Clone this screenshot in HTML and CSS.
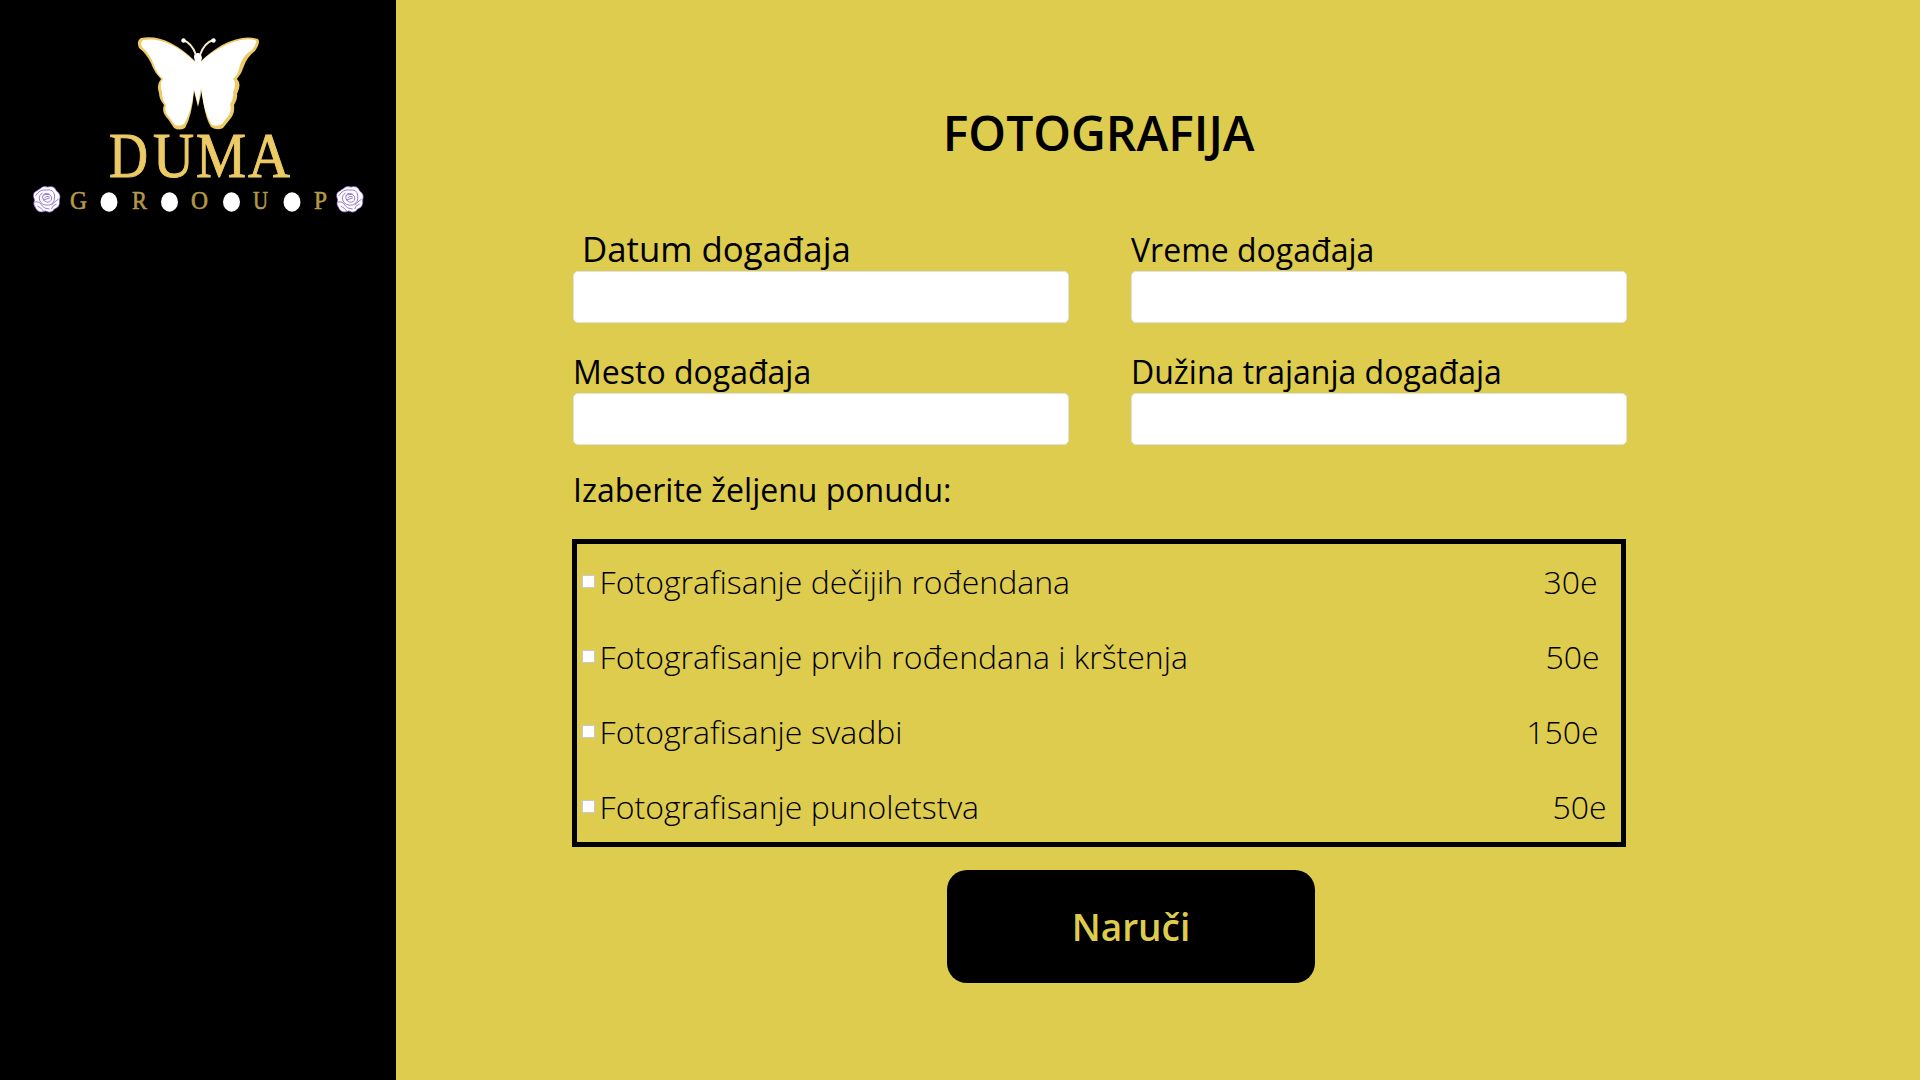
FILE: index.html
```html
<!DOCTYPE html>
<html lang="sr">
<head>
<meta charset="utf-8">
<title>Fotografija</title>
<link rel="stylesheet" href="styles.css">
</head>
<body>
<aside class="sidebar">
<svg class="logo" viewBox="0 0 396 230" role="img" aria-label="Duma Group">
  <defs>
    <g id="rose">
      <path fill="#fff" stroke="#7a4fc0" stroke-width=".7" d="M-7-10Q-3-14 1-12Q8-14 10-8Q15-5 13 1Q14 8 8 10Q5 15-1 12Q-8 15-11 9Q-14 5-12 1Q-15-6-10-8Z"/>
      <g fill="none" stroke="#7046bd" stroke-width=".7">
        <path d="M-11-3Q-7-10 0-9Q7-10 8-4Q9 4 3 6Q-5 7-7 1Q-8-4-4-6"/>
        <path d="M-4-2Q-3-7 2-5Q6-3 5 0Q4 4 0 3Q-4 2-4-2Z"/>
        <path d="M-2-1Q0-4 3-2M-3 1L3-1M-3-4L3-5"/>
        <path d="M-12 3Q-7 2-5 6Q-3 10 3 10M-9 7Q-5 9-3 12M5 10Q5 7 10 5M12 0Q8 3 5 6"/>
      </g>
    </g>
  </defs>
  <path fill="#ecca66" d="M195 61Q166 33 141 38Q136 41 139 48Q146 53 151 63Q154 72 161 79Q156 85 159 93Q159 99 164 105Q161 112 168 119L174 128Q179 131 185 128Q192 116 194 91L198 107L202 90Q204 116 211 127Q217 131 223 128L231 118Q235 113 234 105Q238 99 237 94Q242 84 237 79Q242 73 244 66Q247 57 255 51Q261 42 258 39Q243 34 222 45Q209 53 201 61Z"/>
  <path fill="#fff" d="M195 62Q168 36 143 40Q139 43 143 48Q150 54 154 65Q157 74 163 79Q159 83 162 92Q162 100 166 105Q164 112 169 117L175 125Q180 127 184 124Q192 111 194 89L198 105L201 88Q204 114 212 125Q217 127 222 124L229 115Q232 111 230 104Q234 99 233 93Q237 82 233 79Q238 75 240 65Q243 55 252 50Q258 42 255 40Q241 37 222 47Q208 54 201 62L202 58Q201 53 198 53Q194 53 194 57Z"/>
  <path class="antennae" d="M196 55Q192 43 183 40M200 55Q204 43 213 40"/>
  <circle cx="183.5" cy="40.5" r="2.2" fill="#fff"/><circle cx="213.5" cy="40.5" r="2.2" fill="#fff"/>
  <g class="wordmark">
    <text x="109" y="177" textLength="39" lengthAdjust="spacingAndGlyphs">D</text>
    <text x="153" y="177" textLength="41" lengthAdjust="spacingAndGlyphs">U</text>
    <text x="196" y="177" textLength="50" lengthAdjust="spacingAndGlyphs">M</text>
    <text x="248" y="177" textLength="42" lengthAdjust="spacingAndGlyphs">A</text>
  </g>
  <g class="subword">
    <text x="70" y="209" textLength="17" lengthAdjust="spacingAndGlyphs">G</text>
    <text x="132" y="209" textLength="15" lengthAdjust="spacingAndGlyphs">R</text>
    <text x="191" y="209" textLength="17" lengthAdjust="spacingAndGlyphs">O</text>
    <text x="253" y="209" textLength="15" lengthAdjust="spacingAndGlyphs">U</text>
    <text x="314" y="209" textLength="13" lengthAdjust="spacingAndGlyphs">P</text>
  </g>
  <g fill="#fff">
    <ellipse cx="109" cy="202" rx="8.5" ry="9.7"/>
    <ellipse cx="169.5" cy="202" rx="8.5" ry="9.7"/>
    <ellipse cx="231.5" cy="202" rx="8.5" ry="9.7"/>
    <ellipse cx="292" cy="202" rx="8.5" ry="9.7"/>
  </g>
  <use href="#rose" x="46.5" y="199"/>
  <use href="#rose" x="349.7" y="199"/>
</svg>
</aside>
<main class="main">
  <form class="form">
    <h1 class="title">FOTOGRAFIJA</h1>
    <div class="fields">
      <label class="field"><span class="label label-large">Datum događaja</span><input class="input" type="text"></label>
      <label class="field"><span class="label">Vreme događaja</span><input class="input" type="text"></label>
      <label class="field"><span class="label">Mesto događaja</span><input class="input" type="text"></label>
      <label class="field"><span class="label">Dužina trajanja događaja</span><input class="input" type="text"></label>
    </div>
    <p class="label prompt">Izaberite željenu ponudu:</p>
    <div class="offers">
      <label class="offer"><input class="check" type="checkbox"><span class="name">Fotografisanje dečijih rođendana</span><span class="price">30e</span></label>
      <label class="offer offer-first"><input class="check" type="checkbox"><span class="name">Fotografisanje prvih rođendana i krštenja</span><span class="price">50e</span></label>
      <label class="offer offer-wedding"><input class="check" type="checkbox"><span class="name">Fotografisanje svadbi</span><span class="price">150e</span></label>
      <label class="offer offer-adult"><input class="check" type="checkbox"><span class="name">Fotografisanje punoletstva</span><span class="price">50e</span></label>
    </div>
    <button class="submit" type="button">Naruči</button>
  </form>
</main>
</body>
</html>
```
FILE: styles.css
```css
* { box-sizing: border-box; }

body {
  display: flex;
  height: 1080px;
  margin: 0;
  overflow: hidden;
  background: #decc4e;
  color: #000;
  font-family: "Open Sans", sans-serif;
}

.sidebar {
  flex: none;
  width: 396px;
  background: #000;
}

.logo {
  display: block;
  width: 396px;
  height: 230px;
}

.antennae {
  fill: none;
  stroke: #f8ebc4;
  stroke-width: 2;
}

.wordmark,
.subword {
  font-family: "Liberation Serif", serif;
}

.wordmark {
  fill: #ecca66;
  stroke: #ecca66;
  stroke-width: 1;
  font-size: 63px;
}

.subword {
  fill: #b5994a;
  stroke: #b5994a;
  stroke-width: 0.6;
  font-size: 25px;
}

.main {
  flex: 1;
  padding: 100px 0 0 176px;
}

.form {
  width: 1054.4px;
}

.title {
  margin: 0 1px 62px 0;
  font-size: 48px;
  font-weight: 600;
  line-height: 66px;
  text-align: center;
}

.fields {
  display: grid;
  grid-template-columns: 495.5px 495.5px;
  column-gap: 62.5px;
  row-gap: 27px;
  padding-left: 1px;
}

.field {
  display: block;
}

.label {
  display: block;
  height: 43px;
  font-size: 32px;
  line-height: 43px;
}

.label-large {
  padding-left: 9px;
  font-size: 34.8px;
  line-height: 41px;
}

.input {
  display: block;
  width: 100%;
  height: 52px;
  border: 1px solid #dee2e6;
  border-radius: 5px;
  background: #fff;
}

.prompt {
  margin: 23px 0 28px 1px;
}

.offers {
  height: 308px;
  border: 5px solid #000;
}

.offer {
  display: flex;
  align-items: center;
  height: 75px;
  padding: 0 23.8px 0 5px;
  font-size: 32px;
  font-weight: 300;
  line-height: 75px;
}

.offer-first { padding-right: 21.8px; }
.offer-wedding { padding-right: 22.8px; }
.offer-adult { padding-right: 14.8px; }

.check {
  width: 13px;
  height: 13px;
  margin: 0 4.6px 0 0;
  border: 1px solid #c8c8d0;
  background: #fff;
  appearance: none;
}

.price { margin-left: auto; }

.submit {
  display: block;
  width: 368px;
  height: 113px;
  margin: 23px 0 0 375px;
  padding: 0;
  border: 0;
  border-radius: 20px;
  background: #000;
  color: #decc4e;
  font-family: inherit;
  font-size: 37px;
  font-weight: 600;
}
```
